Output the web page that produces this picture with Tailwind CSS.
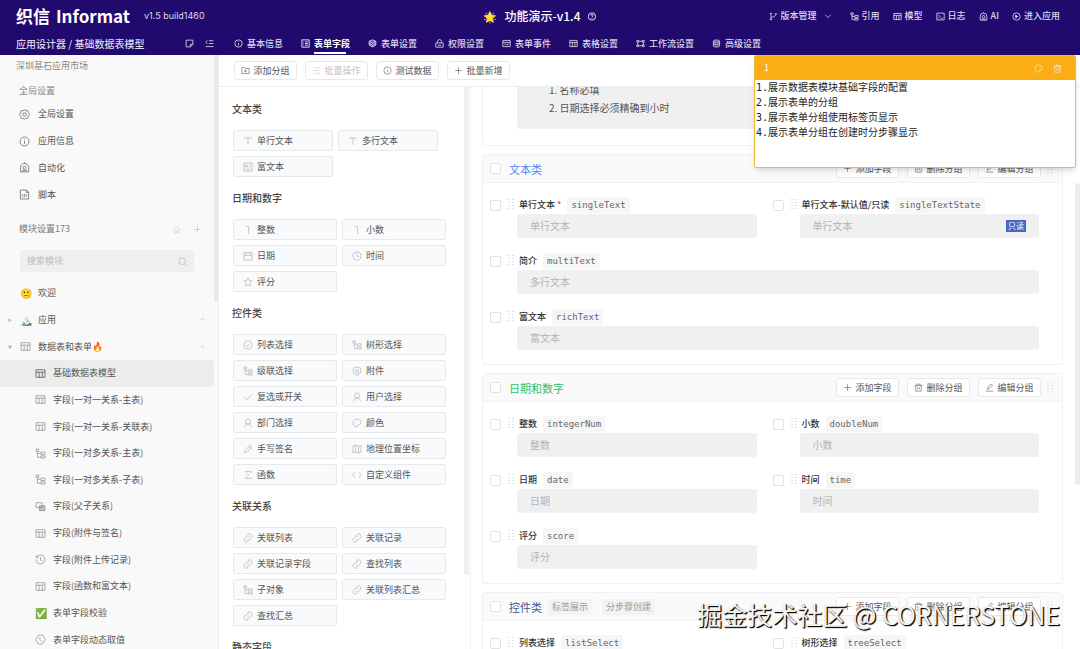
<!DOCTYPE html>
<html lang="zh-CN">
<head>
<meta charset="utf-8">
<title>功能演示-v1.4</title>
<script src="https://cdn.jsdelivr.net/npm/@tailwindcss/browser@4"></script>
</head>
<body class="flex h-screen flex-col overflow-hidden bg-white font-['Noto_Sans_CJK_SC',sans-serif] text-[9px] leading-[18px] text-[#555]">

<svg class="hidden" fill="none" stroke="currentColor">
  <symbol id="table" viewBox="0 0 16 16"><path d="M1.500 2.500h13v11h-13zM1.500 6h13M6 6v7.500M10.500 6v7.500"/></symbol>
  <symbol id="tree" viewBox="0 0 16 16"><path d="M1.500 1.500h4v3.500h-4zM3.500 5v8.500H8M3.500 8H8M8.500 6h6v3.500h-6zM8.500 11.500h6v3h-6z"/></symbol>
  <symbol id="info" viewBox="0 0 16 16"><circle cx="8" cy="8" r="6.500"/><path d="M8 7v4.500M8 4.300v1.200"/></symbol>
  <symbol id="help" viewBox="0 0 16 16"><circle cx="8" cy="8" r="6.500"/><path d="M6 6.500c0-2.700 4-2.700 4 0C10 8 8 8 8 9.700M8 11v1.300"/></symbol>
  <symbol id="gear" viewBox="0 0 16 16"><path d="M8 1l2 1.500 2.700-.2.800 2.500L15 8l-1.500 3.200-.8 2.500-2.700-.2L8 15l-2-1.500-2.700.2-.8-2.500L1 8l1.500-3.200.8-2.500 2.700.2z"/><circle cx="8" cy="8" r="2.500"/></symbol>
  <symbol id="robot" viewBox="0 0 16 16"><path d="M2 14.500V8a6 6 0 0 1 12 0v6.500zM8 2V.5M4 12.500h8"/><circle cx="8" cy="8.500" r="2.300"/></symbol>
  <symbol id="script" viewBox="0 0 16 16"><path d="M2 1.500h9l3 3v10H2zM10.500 1.500V5H14M6 7.500L4.500 9.500 6 11.500M10 7.500l1.500 2-1.500 2M8.500 7l-1 5"/></symbol>
  <symbol id="search" viewBox="0 0 16 16"><circle cx="7.500" cy="7.500" r="6"/><path d="M12 12l3 3"/></symbol>
  <symbol id="plus" viewBox="0 0 16 16"><path d="M8 2v12M2 8h12"/></symbol>
  <symbol id="home" viewBox="0 0 16 16"><path d="M2 8l6-5 6 5M4 7v7h8V7M7 14v-4h2v4"/></symbol>
  <symbol id="overlap" viewBox="0 0 16 16"><path d="M1.500 2.500h9v7h-9z"/><path d="M6.500 7h8v7h-8z" fill="currentColor" fill-opacity=".5"/></symbol>
  <symbol id="history" viewBox="0 0 16 16"><path d="M2.500 4.500A6.500 6.500 0 1 1 1.500 8M2 1.500v3.500h3.500M8 4.500V8.500l3 2"/></symbol>
  <symbol id="clock" viewBox="0 0 16 16"><circle cx="8" cy="8" r="6.500"/><path d="M8 4v4.500h3.500"/></symbol>
  <symbol id="hexclock" viewBox="0 0 16 16"><path d="M5 1.500h6l4 6.500-4 6.500H5L1 8zM7 4.500V8l3.500 3"/></symbol>
  <symbol id="text" viewBox="0 0 16 16"><path d="M3 5V3h10v2M8 3v11"/></symbol>
  <symbol id="one" viewBox="0 0 16 16"><path d="M4.500 2.500h4.500V14.500"/></symbol>
  <symbol id="rich" viewBox="0 0 16 16"><path d="M1.500 1.500h13v13h-13zM4 5h3v3H4zM9.500 5H12M9.500 8H12M4 11.500h8"/></symbol>
  <symbol id="cal" viewBox="0 0 16 16"><path d="M1.500 3h13v11.500h-13zM1.500 7h13M5 1v4M11 1v4"/></symbol>
  <symbol id="star" viewBox="0 0 16 16"><path d="M8 1.500l2 4.300 4.700.6-3.400 3.200.9 4.700L8 12l-4.200 2.300.9-4.700L1.300 6.400 6 5.800z"/></symbol>
  <symbol id="okay" viewBox="0 0 16 16"><circle cx="8" cy="8" r="6.500"/><path d="M4.500 8l2.500 2.500L11.500 5.500"/></symbol>
  <symbol id="check" viewBox="0 0 16 16"><path d="M2 8.500l4 4L14 4.500"/></symbol>
  <symbol id="clip" viewBox="0 0 16 16"><path d="M8 1.500l6 2V9c0 3-3 5-6 6-3-1-6-3-6-6V3.500zM5.500 6v3a2.500 2.500 0 0 0 5 0V5.500M8 5v4"/></symbol>
  <symbol id="user" viewBox="0 0 16 16"><circle cx="8" cy="5.500" r="4"/><path d="M2.500 15c.3-3.500 2.500-5 5.500-5s5.200 1.500 5.500 5"/></symbol>
  <symbol id="palette" viewBox="0 0 16 16"><path d="M8 1.500C4 1.500 1.500 4.500 1.500 8S4 14.500 7.500 14.500c2 0 1-2.500 2-3.500s5 .5 5-3.500S11.500 1.500 8 1.500z"/><path d="M4.500 8h1M6 4.800h1M10 4.800h1"/></symbol>
  <symbol id="pen" viewBox="0 0 16 16"><path d="M2 14l1-4 8.500-8 3 3L6 13zM9.500 4l3 3"/></symbol>
  <symbol id="edit" viewBox="0 0 16 16"><path d="M4 11l.5-3L11 1.500 13.500 4 7 10.500zM1.500 14.500h13"/></symbol>
  <symbol id="map" viewBox="0 0 16 16"><path d="M1.500 3L5.500 2l5 1.500L14.500 2v11l-4 1.500L5.500 13l-4 1.500zM5.500 2v11M10.500 3.500v11"/></symbol>
  <symbol id="sigma" viewBox="0 0 16 16"><path d="M13 4.500V2.500H3.500L9 8l-5.500 5.500H13v-2"/></symbol>
  <symbol id="code" viewBox="0 0 16 16"><path d="M5 3.500L1 8l4 4.500M11 3.500L15 8l-4 4.500"/></symbol>
  <symbol id="link" viewBox="0 0 16 16"><path d="M6.500 4l1.500-1.500a3.700 3.700 0 0 1 5.500 5L11 10a3.500 3.500 0 0 1-5 0M9.500 12L8 13.500a3.700 3.700 0 0 1-5.500-5L5 6a3.500 3.500 0 0 1 5 0"/></symbol>
  <symbol id="folder" viewBox="0 0 16 16"><path d="M1.500 2.500h5L8 4.500h6.500v9h-13zM8 6.500v5M5.500 9h5"/></symbol>
  <symbol id="list" viewBox="0 0 16 16"><path d="M5 3h9M2 8h11M5 13h9M1.500 3h1.500M1.500 13h1.500"/></symbol>
  <symbol id="outdent" viewBox="0 0 16 16"><path d="M7 3h8M7 8h8M1 13.500h14M4 2.500L1.500 5.500 4 8.500"/></symbol>
  <symbol id="note" viewBox="0 0 16 16"><path d="M2 2h12v7.500L9.500 14H2zM14 9.500H9.500V14"/></symbol>
  <symbol id="trash" viewBox="0 0 16 16"><path d="M1 4.500h14M5 4.500V2h6v2.500M3 4.500v10h10v-10M6.500 7.500v4M9.500 7.500v4"/></symbol>
  <symbol id="form" viewBox="0 0 16 16"><path d="M1.500 1.500h13v13h-13zM4 5h1M7 5h5M4 8h1M7 8h5M4 11h1M7 11h5"/></symbol>
  <symbol id="stack" viewBox="0 0 16 16"><path d="M8 1.500l6 2.500v6.500L8 14.500 2 10.500V4z" fill="currentColor" fill-opacity=".35"/><path d="M2 4l6 3.500L14 4M2 8l6 3.500L14 8"/></symbol>
  <symbol id="lock" viewBox="0 0 16 16"><path d="M1.500 7h13v7.500h-13zM4.500 7V4.500a3.500 3.500 0 0 1 7 0V7M5 11h6"/></symbol>
  <symbol id="event" viewBox="0 0 16 16"><path d="M1.500 2.500h13v11h-13zM1.500 6h13M4 10l2-1.500 2.500 2L12 8.500"/></symbol>
  <symbol id="flow" viewBox="0 0 16 16"><path d="M1.500 2.500h3v3h-3zM11.500 2.500h3v3h-3zM1.500 10.500h3v3h-3zM11.500 10.500h3v3h-3zM4.500 4h7M4.500 12h7M3 5.500v5M13 5.500v5"/></symbol>
  <symbol id="db" viewBox="0 0 16 16"><path d="M2.500 4c0-3 11-3 11 0v8c0 3-11 3-11 0z" fill="currentColor" fill-opacity=".3"/><path d="M2.500 4c0 2.500 11 2.500 11 0M2.500 8c0 2.500 11 2.500 11 0"/></symbol>
  <symbol id="branch" viewBox="0 0 16 16"><path d="M3.500 2v12M3.500 11c0-3 8.500-1 8.500-7M1.500 2.500h4M1.500 13.500h4M10 3.500h4.500"/></symbol>
  <symbol id="down" viewBox="0 0 16 16"><path d="M2.500 5.500L8 11l5.500-5.500"/></symbol>
  <symbol id="console" viewBox="0 0 16 16"><path d="M1.500 2h13v12h-13zM4 5l3 3-3 3M8 11h4"/></symbol>
  <symbol id="enter" viewBox="0 0 16 16"><circle cx="8" cy="8" r="6.500"/><path d="M6.500 5.500L10 8l-3.500 2.500z" fill="currentColor"/></symbol>
  <symbol id="grip" viewBox="0 0 6 12"><path d="M1 0v12M5 0v12" stroke-dasharray="1 2"/></symbol>
</svg>

<header class="flex h-[55px] shrink-0 flex-col bg-[#210a6e] text-[#dcd8ea] [&_svg]:size-[9px] [&_svg]:shrink-0 [&_svg]:fill-none [&_svg]:stroke-current [&_svg]:stroke-[1.5]">
  <div class="relative flex h-8 items-center justify-between pr-5 pl-4">
    <div class="flex items-center gap-[14px]">
      <h1 class="flex items-center gap-[6px] font-bold whitespace-nowrap text-white"><span class="text-[17px]">织信</span><span class="text-[17px]">Informat</span></h1>
      <span class="font-[Inter,sans-serif] text-[9px]">v1.5 build1460</span>
    </div>
    <div class="absolute left-1/2 flex -translate-x-1/2 items-center gap-[7px] text-[12px] font-medium text-white">
      <span class="text-[11px]">🌟</span><span>功能演示-v1.4</span><svg><use href="#help"/></svg>
    </div>
    <nav class="flex items-center gap-[13px] font-medium whitespace-nowrap [&>a]:flex [&>a]:items-center [&>a]:gap-[3px]">
      <a href="#" class="mr-[5px]"><svg><use href="#branch"/></svg>版本管理<svg class="ml-1 size-2!"><use href="#down"/></svg></a>
      <a href="#"><svg><use href="#tree"/></svg>引用</a>
      <a href="#"><svg><use href="#table"/></svg>模型</a>
      <a href="#"><svg><use href="#console"/></svg>日志</a>
      <a href="#"><svg><use href="#robot"/></svg>AI</a>
      <a href="#"><svg><use href="#enter"/></svg>进入应用</a>
    </nav>
  </div>
  <div class="flex h-[23px] items-center">
    <div class="flex w-[218px] shrink-0 items-center justify-between pr-1 pl-4">
      <span class="text-[10px] font-medium">应用设计器 / 基础数据表模型</span>
      <span class="flex gap-[11px]"><button aria-label="便签"><svg><use href="#note"/></svg></button><button aria-label="收起"><svg><use href="#outdent"/></svg></button></span>
    </div>
    <nav class="flex h-full gap-[18px] pl-4 font-medium whitespace-nowrap [&>a]:flex [&>a]:items-center [&>a]:gap-1">
      <a href="#"><svg><use href="#info"/></svg>基本信息</a>
      <a href="#" class="relative font-bold text-white after:absolute after:bottom-[1px] after:left-[13px] after:h-[2px] after:w-8 after:bg-white"><svg><use href="#form"/></svg>表单字段</a>
      <a href="#"><svg><use href="#stack"/></svg>表单设置</a>
      <a href="#"><svg><use href="#lock"/></svg>权限设置</a>
      <a href="#"><svg><use href="#event"/></svg>表单事件</a>
      <a href="#"><svg><use href="#table"/></svg>表格设置</a>
      <a href="#"><svg><use href="#flow"/></svg>工作流设置</a>
      <a href="#"><svg><use href="#db"/></svg>高级设置</a>
    </nav>
  </div>
</header>

<div class="relative flex min-h-0 flex-1">
  <aside class="flex w-[219px] shrink-0 border-r border-[#eee] bg-[#f9f9f9]">
    <div class="min-w-0 flex-1 overflow-hidden whitespace-nowrap [&_svg]:size-[11px] [&_svg]:shrink-0 [&_svg]:fill-none [&_svg]:stroke-current">
      <p class="pt-[2px] pl-4 text-[#888]">深圳基石应用市场</p>
      <h2 class="pt-[7px] pl-[19px] text-[#888]">全局设置</h2>
      <ul class="mt-px grid h-[107px] auto-rows-fr [&_a]:flex [&_a]:h-full [&_a]:items-center [&_a]:gap-2 [&_a]:pl-[19px]">
        <li><a href="#"><svg><use href="#gear"/></svg>全局设置</a></li>
        <li><a href="#"><svg><use href="#info"/></svg>应用信息</a></li>
        <li><a href="#"><svg><use href="#robot"/></svg>自动化</a></li>
        <li><a href="#"><svg><use href="#script"/></svg>脚本</a></li>
      </ul>
      <div class="mt-3 flex items-center pr-3 pl-[19px] text-[#777]">
        <h2 class="flex-1">模块设置173</h2>
        <button aria-label="主页" class="mr-3 text-[#ccc]"><svg class="size-[9px]!"><use href="#home"/></svg></button>
        <button aria-label="新增模块" class="text-[#bbb]"><svg class="size-[9px]!"><use href="#plus"/></svg></button>
      </div>
      <label class="mt-3 mr-5 ml-5 flex h-[22px] items-center rounded-[3px] bg-[#efefef] px-[7px] text-[#aaa]">
        <input type="search" aria-label="搜索模块" placeholder="搜索模块" class="min-w-0 flex-1 outline-none placeholder:text-[#bbb]"><svg class="size-[9px]!"><use href="#search"/></svg>
      </label>
      <ul class="mt-2 grid h-[373px] auto-rows-fr [&_a]:flex [&_a]:h-full [&_a]:items-center [&_a]:gap-[7px] [&_a>svg]:text-[#888]">
        <li><a href="#" class="pl-5"><span class="w-[11px] text-[10px]">🙂</span><span>欢迎</span></a></li>
        <li><a href="#" class="relative pl-5 before:absolute before:left-2 before:text-[4px] before:text-[#bbb] before:content-['▶']"><span class="w-[11px] text-[10px]">🏔️</span><span>应用</span><svg class="mr-2 ml-auto size-[7px]! text-[#ccc]!"><use href="#plus"/></svg></a></li>
        <li><a href="#" class="relative pl-5 before:absolute before:left-2 before:text-[4px] before:text-[#aaa] before:content-['▼']"><svg><use href="#table"/></svg><span>数据表和表单🔥</span><svg class="mr-2 ml-auto size-[7px]! text-[#ccc]!"><use href="#plus"/></svg></a></li>
        <li><a href="#" class="rounded-r bg-[#ececec] pl-[35px]"><svg class="text-[#444]!"><use href="#table"/></svg>基础数据表模型</a></li>
        <li><a href="#" class="pl-[35px]"><svg><use href="#table"/></svg>字段(一对一关系-主表)</a></li>
        <li><a href="#" class="pl-[35px]"><svg><use href="#table"/></svg>字段(一对一关系-关联表)</a></li>
        <li><a href="#" class="pl-[35px]"><svg><use href="#tree"/></svg>字段(一对多关系-主表)</a></li>
        <li><a href="#" class="pl-[35px]"><svg><use href="#tree"/></svg>字段(一对多关系-子表)</a></li>
        <li><a href="#" class="pl-[35px]"><svg><use href="#overlap"/></svg>字段(父子关系)</a></li>
        <li><a href="#" class="pl-[35px]"><svg><use href="#table"/></svg>字段(附件与签名)</a></li>
        <li><a href="#" class="pl-[35px]"><svg><use href="#history"/></svg>字段(附件上传记录)</a></li>
        <li><a href="#" class="pl-[35px]"><svg><use href="#table"/></svg>字段(函数和富文本)</a></li>
        <li><a href="#" class="pl-[35px]"><span class="w-[11px] text-[10px]">✅</span>表单字段校验</a></li>
        <li><a href="#" class="pl-[35px]"><svg><use href="#hexclock"/></svg>表单字段动态取值</a></li>
      </ul>
    </div>
    <div class="h-[247px] w-1 rounded-b bg-[#e9e9e9]"></div>
  </aside>

  <div class="flex min-w-0 flex-1 flex-col">
    <div class="flex h-8 shrink-0 items-center gap-2 border-b border-[#eee] pl-[15px] [&_button]:flex [&_button]:h-[19px] [&_button]:w-[63px] [&_button]:items-center [&_button]:justify-center [&_button]:gap-[3px] [&_button]:rounded-[3px] [&_button]:border [&_button]:border-[#e8e8e8] [&_svg]:size-[9px] [&_svg]:fill-none [&_svg]:stroke-current">
      <button><svg><use href="#folder"/></svg>添加分组</button>
      <button disabled class="text-[#c4c4c4]"><svg><use href="#list"/></svg>批量操作</button>
      <button><svg><use href="#info"/></svg>测试数据</button>
      <button><svg><use href="#plus"/></svg>批量新增</button>
    </div>

    <div class="flex min-h-0 flex-1">
      <section class="flex w-[252px] shrink-0 justify-between border-r border-[#f0f0f0]">
        <div class="overflow-hidden pt-3 pl-[14px] [&_button]:flex [&_button]:h-[21px] [&_button]:items-center [&_button]:gap-1 [&_button]:rounded-[2px] [&_button]:border [&_button]:border-[#e6e9ec] [&_button]:bg-[#f9fafc] [&_button]:pl-[9px] [&_div]:my-[11px] [&_div]:grid [&_div]:grid-cols-2 [&_div]:gap-[5px] [&_h3]:-ml-px [&_h3]:text-[10px] [&_h3]:leading-5 [&_h3]:font-medium [&_h3]:text-[#444] [&_svg]:size-[10px] [&_svg]:fill-none [&_svg]:stroke-[#aaa]">
          <h3>文本类</h3>
          <div class="w-[205px]">
            <button><svg><use href="#text"/></svg>单行文本</button>
            <button><svg><use href="#text"/></svg>多行文本</button>
            <button><svg><use href="#rich"/></svg>富文本</button>
          </div>
          <h3>日期和数字</h3>
          <div class="w-[213px]">
            <button><svg><use href="#one"/></svg>整数</button>
            <button><svg><use href="#one"/></svg>小数</button>
            <button><svg><use href="#cal"/></svg>日期</button>
            <button><svg><use href="#clock"/></svg>时间</button>
            <button><svg><use href="#star"/></svg>评分</button>
          </div>
          <h3>控件类</h3>
          <div class="w-[213px]">
            <button><svg><use href="#okay"/></svg>列表选择</button>
            <button><svg><use href="#tree"/></svg>树形选择</button>
            <button><svg><use href="#tree"/></svg>级联选择</button>
            <button><svg><use href="#clip"/></svg>附件</button>
            <button><svg><use href="#check"/></svg>复选或开关</button>
            <button><svg><use href="#user"/></svg>用户选择</button>
            <button><svg><use href="#user"/></svg>部门选择</button>
            <button><svg><use href="#palette"/></svg>颜色</button>
            <button><svg><use href="#pen"/></svg>手写签名</button>
            <button><svg><use href="#map"/></svg>地理位置坐标</button>
            <button><svg><use href="#sigma"/></svg>函数</button>
            <button><svg><use href="#code"/></svg>自定义组件</button>
          </div>
          <h3>关联关系</h3>
          <div class="w-[213px]">
            <button><svg><use href="#link"/></svg>关联列表</button>
            <button><svg><use href="#link"/></svg>关联记录</button>
            <button><svg><use href="#link"/></svg>关联记录字段</button>
            <button><svg><use href="#link"/></svg>查找列表</button>
            <button><svg><use href="#tree"/></svg>子对象</button>
            <button><svg><use href="#link"/></svg>关联列表汇总</button>
            <button><svg><use href="#link"/></svg>查找汇总</button>
          </div>
          <h3>静态字段</h3>
        </div>
        <div class="mr-px h-[488px] w-[5px] rounded-b bg-[#efefef]"></div>
      </section>

      <main class="min-w-0 flex-1 overflow-hidden pr-3 pl-[11px]
        [&_.card]:mb-2 [&_.card]:rounded-[3px] [&_.card]:border [&_.card]:border-[#f0f0f0]
        [&_header]:flex [&_header]:h-7 [&_header]:items-center [&_header]:border-b [&_header]:border-[#f2f2f2] [&_header]:bg-[#fafafa] [&_header]:pr-[9px] [&_header]:pl-[7px]
        [&_h2]:mr-auto [&_h2]:ml-2 [&_h2]:text-[11px] [&_h2]:leading-4
        [&_header_button]:mr-2 [&_header_button]:flex [&_header_button]:h-[19px] [&_header_button]:w-[63px] [&_header_button]:items-center [&_header_button]:justify-center [&_header_button]:gap-[3px] [&_header_button]:rounded-[3px] [&_header_button]:border [&_header_button]:border-[#e8e8e8] [&_header_button]:bg-white [&_header_.grip]:-ml-[2px]
        [&_svg]:size-[9px] [&_svg]:fill-none [&_svg]:stroke-current [&_.grip]:h-3 [&_.grip]:w-[6px] [&_.grip]:text-[#c4c4c4]
        [&_input[type=checkbox]]:size-[11px] [&_input[type=checkbox]]:shrink-0 [&_input[type=checkbox]]:appearance-none [&_input[type=checkbox]]:rounded-[2px] [&_input[type=checkbox]]:border [&_input[type=checkbox]]:border-[#e2e2e2] [&_input[type=checkbox]]:bg-white
        [&_.fields]:grid [&_.fields]:grid-cols-2 [&_.fields]:gap-x-4 [&_.fields]:gap-y-[14px] [&_.fields]:pt-[13px] [&_.fields]:pr-[23px] [&_.fields]:pb-[14px] [&_.fields]:pl-[7px]
        [&_.name]:flex [&_.name]:h-[18px] [&_.name]:items-center [&_.name]:whitespace-nowrap [&_.name_label]:ml-[5px] [&_.name_label]:font-medium [&_.name_label]:text-[#333] [&_.name_.grip]:ml-[7px]
        [&_code]:ml-[6px] [&_code]:rounded-[2px] [&_code]:bg-[#f6f6f6] [&_code]:px-1 [&_code]:font-['DejaVu_Sans_Mono','Noto_Sans_CJK_SC',monospace] [&_code]:leading-4 [&_code]:text-[#666]
        [&_.box]:ml-[27px] [&_.box]:flex [&_.box]:h-6 [&_.box]:items-center [&_.box]:rounded-[3px] [&_.box]:bg-[#f0f0f0] [&_.box]:px-[13px] [&_.box_input]:min-w-0 [&_.box_input]:flex-1 [&_.box_input]:text-[10px] [&_.box_input]:outline-none [&_.box_input]:placeholder:text-[#b0b4b8]">
        <div class="card -mt-[7px] pr-[23px] pb-4 pl-[34px]">
          <ol class="h-12 list-inside list-decimal rounded-[3px] bg-[#f0f0f0] pl-8 text-[10px]">
            <li>名称必填</li>
            <li>日期选择必须精确到小时</li>
          </ol>
        </div>

        <div class="card">
          <header><input type="checkbox" aria-label="文本类"><h2 class="text-[#4c84f5]">文本类</h2>
            <button><svg><use href="#plus"/></svg>添加字段</button><button><svg><use href="#trash"/></svg>删除分组</button><button><svg><use href="#edit"/></svg>编辑分组</button><svg class="grip"><use href="#grip"/></svg>
          </header>
          <div class="fields">
            <div>
              <div class="name"><input type="checkbox" aria-label="选择单行文本"><svg class="grip"><use href="#grip"/></svg><label for="f1">单行文本<span class="text-[#e5484d]"> *</span></label><code>singleText</code></div>
              <div class="box"><input id="f1" placeholder="单行文本"></div>
            </div>
            <div>
              <div class="name"><input type="checkbox" aria-label="选择只读文本"><svg class="grip"><use href="#grip"/></svg><label for="f2">单行文本-默认值/只读</label><code>singleTextState</code></div>
              <div class="box"><input id="f2" placeholder="单行文本" readonly><span class="bg-[#4668c5] px-[2px] text-[8px] leading-3 text-white">只读</span></div>
            </div>
            <div class="col-span-2">
              <div class="name"><input type="checkbox" aria-label="选择简介"><svg class="grip"><use href="#grip"/></svg><label for="f3">简介</label><code>multiText</code></div>
              <div class="box"><input id="f3" placeholder="多行文本"></div>
            </div>
            <div class="col-span-2">
              <div class="name"><input type="checkbox" aria-label="选择富文本"><svg class="grip"><use href="#grip"/></svg><label for="f4">富文本</label><code>richText</code></div>
              <div class="box"><input id="f4" placeholder="富文本"></div>
            </div>
          </div>
        </div>

        <div class="card">
          <header><input type="checkbox" aria-label="日期和数字"><h2 class="text-[#2fc06c]">日期和数字</h2>
            <button><svg><use href="#plus"/></svg>添加字段</button><button><svg><use href="#trash"/></svg>删除分组</button><button><svg><use href="#edit"/></svg>编辑分组</button><svg class="grip"><use href="#grip"/></svg>
          </header>
          <div class="fields">
            <div>
              <div class="name"><input type="checkbox" aria-label="选择整数"><svg class="grip"><use href="#grip"/></svg><label for="f5">整数</label><code>integerNum</code></div>
              <div class="box"><input id="f5" placeholder="整数"></div>
            </div>
            <div>
              <div class="name"><input type="checkbox" aria-label="选择小数"><svg class="grip"><use href="#grip"/></svg><label for="f6">小数</label><code>doubleNum</code></div>
              <div class="box"><input id="f6" placeholder="小数"></div>
            </div>
            <div>
              <div class="name"><input type="checkbox" aria-label="选择日期"><svg class="grip"><use href="#grip"/></svg><label for="f7">日期</label><code>date</code></div>
              <div class="box"><input id="f7" placeholder="日期"></div>
            </div>
            <div>
              <div class="name"><input type="checkbox" aria-label="选择时间"><svg class="grip"><use href="#grip"/></svg><label for="f8">时间</label><code>time</code></div>
              <div class="box"><input id="f8" placeholder="时间"></div>
            </div>
            <div>
              <div class="name"><input type="checkbox" aria-label="选择评分"><svg class="grip"><use href="#grip"/></svg><label for="f9">评分</label><code>score</code></div>
              <div class="box"><input id="f9" placeholder="评分"></div>
            </div>
          </div>
        </div>

        <div class="card">
          <header><input type="checkbox" aria-label="控件类"><h2 class="flex items-center text-[#46558c]">控件类<span class="ml-[6px] rounded-[2px] bg-[#f3f3f3] px-1 text-[9px] text-[#999]">标签展示</span><span class="ml-[10px] rounded-[2px] bg-[#f3f3f3] px-1 text-[9px] text-[#999]">分步骤创建</span></h2>
            <button><svg><use href="#plus"/></svg>添加字段</button><button><svg><use href="#trash"/></svg>删除分组</button><button><svg><use href="#edit"/></svg>编辑分组</button><svg class="grip"><use href="#grip"/></svg>
          </header>
          <div class="fields">
            <div>
              <div class="name"><input type="checkbox" aria-label="选择列表选择"><svg class="grip"><use href="#grip"/></svg><label for="f10">列表选择</label><code>listSelect</code></div>
              <div class="box"><input id="f10" placeholder="列表选择"></div>
            </div>
            <div>
              <div class="name"><input type="checkbox" aria-label="选择树形选择"><svg class="grip"><use href="#grip"/></svg><label for="f11">树形选择</label><code>treeSelect</code></div>
              <div class="box"><input id="f11" placeholder="树形选择"></div>
            </div>
          </div>
        </div>
      </main>
      <div class="mt-24 h-[302px] w-[5px] shrink-0 rounded bg-[#ececec]"></div>
    </div>
  </div>

  <section class="absolute top-0 right-1 flex h-[113px] w-[322px] flex-col rounded-[2px] border border-[#f0b93a] bg-white shadow-md">
    <div class="flex h-6 shrink-0 items-center bg-[#faad14] pr-[13px] pl-[9px] text-white [&_svg]:size-[9px] [&_svg]:fill-none [&_svg]:stroke-current">
      <span class="mr-auto">1</span>
      <button aria-label="颜色" class="mr-[10px]"><svg><use href="#palette"/></svg></button>
      <button aria-label="删除"><svg><use href="#trash"/></svg></button>
    </div>
    <textarea aria-label="便签内容" class="min-h-0 flex-1 resize-none overflow-hidden px-px font-['DejaVu_Sans_Mono','Noto_Sans_CJK_SC',monospace] text-[10px] leading-[15px] text-[#222] outline-none">1.展示数据表模块基础字段的配置
2.展示表单的分组
3.展示表单分组使用标签页显示
4.展示表单分组在创建时分步骤显示</textarea>
  </section>

  <p class="pointer-events-none absolute right-5 bottom-[15px] text-[25px] leading-[40px] whitespace-nowrap text-[#f2f2f2] [text-shadow:1px_1px_1px_#000,1px_1px_1px_#222]">掘金技术社区 @ CORNERSTONE</p>
</div>
</body>
</html>
